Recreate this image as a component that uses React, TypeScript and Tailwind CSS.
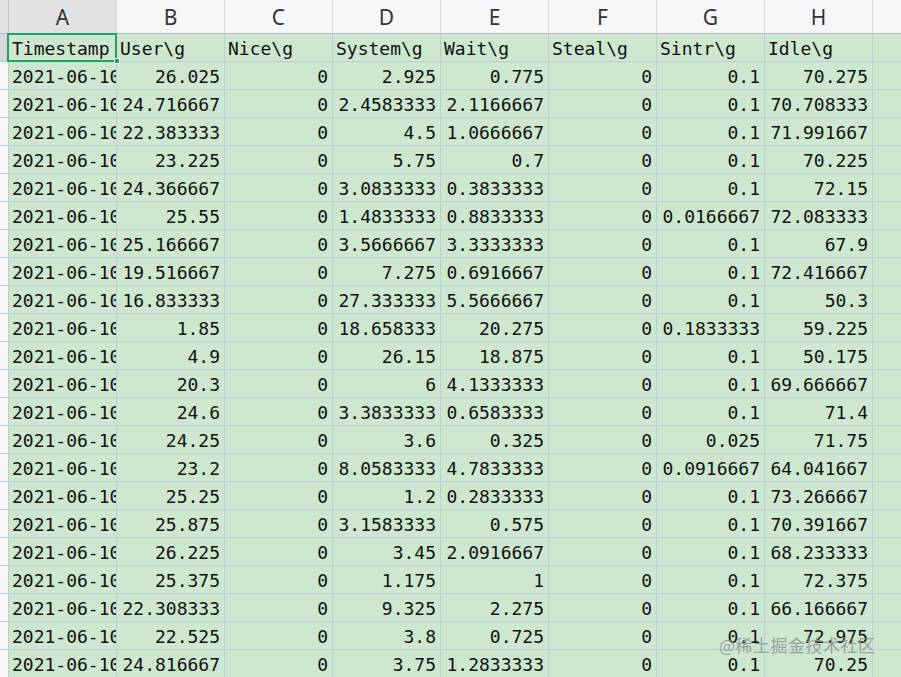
const COLS = ['A', 'B', 'C', 'D', 'E', 'F', 'G', 'H', 'I']

const HEAD = ['Timestamp', 'User\\g', 'Nice\\g', 'System\\g', 'Wait\\g', 'Steal\\g', 'Sintr\\g', 'Idle\\g']

const ROWS: string[][] = [
  ['26.025', '0', '2.925', '0.775', '0', '0.1', '70.275'],
  ['24.716667', '0', '2.4583333', '2.1166667', '0', '0.1', '70.708333'],
  ['22.383333', '0', '4.5', '1.0666667', '0', '0.1', '71.991667'],
  ['23.225', '0', '5.75', '0.7', '0', '0.1', '70.225'],
  ['24.366667', '0', '3.0833333', '0.3833333', '0', '0.1', '72.15'],
  ['25.55', '0', '1.4833333', '0.8833333', '0', '0.0166667', '72.083333'],
  ['25.166667', '0', '3.5666667', '3.3333333', '0', '0.1', '67.9'],
  ['19.516667', '0', '7.275', '0.6916667', '0', '0.1', '72.416667'],
  ['16.833333', '0', '27.333333', '5.5666667', '0', '0.1', '50.3'],
  ['1.85', '0', '18.658333', '20.275', '0', '0.1833333', '59.225'],
  ['4.9', '0', '26.15', '18.875', '0', '0.1', '50.175'],
  ['20.3', '0', '6', '4.1333333', '0', '0.1', '69.666667'],
  ['24.6', '0', '3.3833333', '0.6583333', '0', '0.1', '71.4'],
  ['24.25', '0', '3.6', '0.325', '0', '0.025', '71.75'],
  ['23.2', '0', '8.0583333', '4.7833333', '0', '0.0916667', '64.041667'],
  ['25.25', '0', '1.2', '0.2833333', '0', '0.1', '73.266667'],
  ['25.875', '0', '3.1583333', '0.575', '0', '0.1', '70.391667'],
  ['26.225', '0', '3.45', '2.0916667', '0', '0.1', '68.233333'],
  ['25.375', '0', '1.175', '1', '0', '0.1', '72.375'],
  ['22.308333', '0', '9.325', '2.275', '0', '0.1', '66.166667'],
  ['22.525', '0', '3.8', '0.725', '0', '0.1', '72.975'],
  ['24.816667', '0', '3.75', '1.2833333', '0', '0.1', '70.25'],
]

const cell = 'w-[108px] shrink-0 h-full border-r border-[#b9cfd6] bg-[#cde8ce] overflow-hidden whitespace-nowrap flex items-center leading-none'

export default function App() {
  return (
    <div className="relative w-[901px] h-[677px] overflow-hidden bg-white font-['DejaVu_Sans_Mono',monospace] text-[18px] text-[#111]">
      {/* column letters */}
      <div className="flex h-[34px] border-b border-[#b8b8c8] bg-[#f7f7fa]">
        <div className="w-[9px] shrink-0 border-r border-[#c8c8d0] bg-[#e2e2e4]" />
        {COLS.map((c, i) => (
          <div
            key={c}
            className={`w-[108px] shrink-0 border-r border-[#dcdce2] flex items-center justify-center pt-[2px] leading-none font-['Noto_Sans',sans-serif] text-[21px] text-[#333] ${i === 0 ? 'bg-[#e2e2e4]' : ''}`}
          >
            {c}
          </div>
        ))}
      </div>

      {/* header row */}
      <div className="flex h-[28px] border-b border-[#b9cfd6]">
        <div className="w-[9px] shrink-0 border-r border-[#c8c8d0] bg-[#d9d9dc]" />
        {HEAD.map((h) => (
          <div key={h} className={`${cell} pl-[3px] pt-[2px]`}>{h}</div>
        ))}
        <div className={cell} />
      </div>

      {ROWS.map((r, ri) => (
        <div key={ri} className="flex h-[28px] border-b border-[#b9cfd6]">
          <div className="w-[9px] shrink-0 border-r border-[#c8c8d0] bg-[#f7f7f8]" />
          <div className={`${cell} pl-[3px] pt-[2px]`}>2021-06-10 15:{String(ri).padStart(2, '0')}:00</div>
          {r.map((v, ci) => (
            <div key={ci} className={`${cell} justify-end pr-[4px] pt-[2px]`}>{v}</div>
          ))}
          <div className={cell} />
        </div>
      ))}

      {/* selected cell A1 */}
      <div className="absolute left-[7px] top-[33px] w-[110px] h-[29px] border-2 border-[#21a06a]" />
      <div className="absolute left-[114px] top-[58px] w-[6px] h-[6px] bg-[#21a06a] border border-white" />

      {/* watermark */}
      <div className="absolute left-[719px] top-[636px] font-['Noto_Sans_CJK_SC',sans-serif] text-[17px] leading-none text-[#8a8f8a]/80 tracking-[0.5px]">
        @稀土掘金技术社区
      </div>
    </div>
  )
}
